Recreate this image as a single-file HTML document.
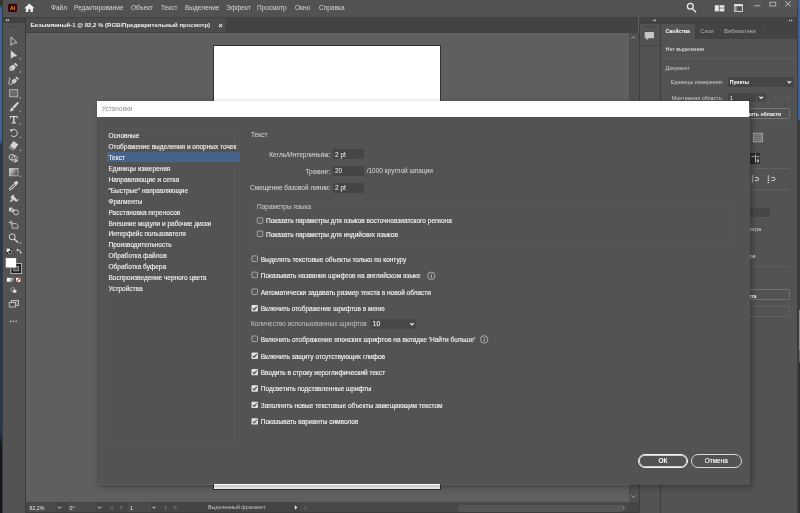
<!DOCTYPE html>
<html><head><meta charset="utf-8">
<style>
html,body{margin:0;padding:0;}
body{width:800px;height:513px;overflow:hidden;background:#5f5f5f;font-family:"Liberation Sans",sans-serif;font-size:6.5px;color:#e6e6e6;position:relative;}
div,span{position:absolute;box-sizing:border-box;white-space:nowrap;}
.t{line-height:10px;height:10px;}
/* app */
#menubar{left:0;top:0;width:800px;height:16.7px;background:#525252;}
#menubar .t{top:2.8px;font-size:6.5px;color:#d6d6d6;}
#leftedge{left:0;top:0;width:1.7px;height:513px;background:linear-gradient(#333 0,#333 5px,#41639a 8px,#41639a 140px,#283656 146px,#283656 430px,#15181f 445px,#15181f 100%);}
#leftedge2{left:1.7px;top:0px;width:1.7px;height:513px;background:#383838;}
#toolbar{left:3.4px;top:17px;width:22.2px;height:496px;background:#535353;border-right:1px solid #3c3c3c;}
#toolhead{left:3.4px;top:17px;width:22px;height:6px;background:#414141;}
#tabbar{left:25px;top:17px;width:613px;height:16px;background:#424242;}
#tab{left:26px;top:18px;width:200.3px;height:14px;background:#4c4c4c;}
#canvas{left:26px;top:33px;width:612px;height:469px;background:#5f5f5f;}
#artboard{left:213px;top:45px;width:228px;height:444.5px;background:#fff;border:0.7px solid #333;}
#vscroll{left:629px;top:33px;width:9.5px;height:469px;background:#505050;}
#statusbar{left:25px;top:502px;width:613.5px;height:11px;background:#444;}
#strip{left:638.5px;top:23.8px;width:22px;height:490px;background:#535353;border-left:1px solid #3d3d3d;border-right:1px solid #3d3d3d;}
#striphead{left:638.5px;top:17px;width:22px;height:6.8px;background:#434343;}
#panel{left:660.5px;top:17px;width:137px;height:496px;background:#535353;}
#panelhead{left:660.5px;top:17px;width:137px;height:7px;background:#434343;}
#paneltabs{left:660.5px;top:24px;width:137px;height:15px;background:#434343;}
#ptab1{left:660.5px;top:24.4px;width:34px;height:14.6px;background:#535353;}
/* dialog */
#dshadow{left:97px;top:101px;width:652.5px;height:383.5px;box-shadow:1.5px 2px 6px 0 rgba(0,0,0,.32);}
#dtitle{left:96.5px;top:100.8px;width:652.6px;height:16.5px;background:#fff;}
#dbody{left:97px;top:117.3px;width:652.5px;height:367.2px;background:#535353;}
.li{left:108.5px;font-size:6.5px;color:#f4f4f4;-webkit-text-stroke:0.12px #f4f4f4;}
.lab{color:#dcdcdc;}
.inp{background:#454545;height:9px;width:31px;left:332.5px;}
.cb{width:6.4px;height:6.4px;border:0.7px solid #b9b9b9;border-radius:0.6px;}
.cb.on{background:#e2e2e2;border-color:#e2e2e2}

.ct{color:#f6f6f6;margin-left:0.6px;-webkit-text-stroke:0.12px #f6f6f6;}
.btn{height:14px;border:1px solid #e8e8e8;border-radius:7px;text-align:center;line-height:12px;color:#fff;font-size:6.2px;}
</style></head><body><div id="root" style="left:0;top:0;width:800px;height:513px;overflow:hidden;will-change:transform;">
<div id="canvas"></div>
<div id="artboard"></div>
<div id="vscroll"></div>
<div id="tabbar"></div>
<div id="tab"></div>
<div class="t" style="left:30.5px;top:20px;font-weight:bold;color:#f0f0f0;font-size:6.0px">Безымянный-1 @ 82,2 % (RGB/Предварительный просмотр)</div>
<div class="t" style="left:218.4px;top:20.7px;color:#f4f4f4;font-size:7.2px;font-weight:bold">×</div>
<div id="statusbar"></div>

<div style="left:27.5px;top:503px;width:28px;height:9px;background:#4b4b4b;"><div class="t" style="left:2px;top:-0.5px;color:#e4e4e4;font-size:5.3px">82,2%</div></div>
<div style="left:67.5px;top:503px;width:28px;height:9px;background:#4b4b4b;"><div class="t" style="left:2px;top:-0.5px;color:#e4e4e4;font-size:5.3px">0°</div></div>
<div style="left:127.5px;top:503px;width:23px;height:9px;background:#4b4b4b;"><div class="t" style="left:2.5px;top:-0.5px;color:#e4e4e4;font-size:5.3px">1</div></div>
<div class="t" style="left:208px;top:502.3px;color:#c4c4c4;font-size:5.3px">Выделенный фрагмент</div>
<div style="left:300px;top:502px;width:329px;height:11px;background:#484848;"></div>
<div style="left:458px;top:504.5px;width:166px;height:7px;background:#565656;border-radius:3.5px;"></div>
<div style="left:629px;top:502px;width:9.5px;height:11px;background:#454545;"></div>
<div style="left:25px;top:512px;width:613px;height:1px;background:#3c3c3c;"></div>

<div id="menubar">
 <div class="t" style="left:51px">Файл</div>
 <div class="t" style="left:74px">Редактирование</div>
 <div class="t" style="left:131px">Объект</div>
 <div class="t" style="left:161px">Текст</div>
 <div class="t" style="left:185px">Выделение</div>
 <div class="t" style="left:226px">Эффект</div>
 <div class="t" style="left:257px">Просмотр</div>
 <div class="t" style="left:295px">Окно</div>
 <div class="t" style="left:319px">Справка</div>
</div>
<div id="toolbar"></div><div id="toolhead"></div>
<div id="leftedge"></div><div id="leftedge2"></div>
<div id="strip"></div><div id="striphead"></div>
<div id="panel"></div><div id="panelhead"></div><div id="paneltabs"></div><div id="ptab1"></div>


<div id="rightedge" style="left:797px;top:0;width:3px;height:513px;background:#3c3c3c;"></div>
<div style="left:798px;top:0;width:2px;height:120px;background:#3f6494;"></div>
<div style="left:798.5px;top:310px;width:1.5px;height:40px;background:#8c8c8c;"></div>
<div style="left:798.5px;top:350px;width:1.5px;height:12px;background:#4a6a96;"></div>
<div style="left:798.5px;top:362px;width:1.5px;height:151px;background:#2c2c2c;"></div>
<div class="t" style="left:665.5px;top:26.3px;font-weight:bold;color:#fff;font-size:5.15px">Свойства</div>
<div class="t" style="left:700.3px;top:26.3px;color:#b8b8b8;font-size:5.4px">Слои</div>
<div class="t" style="left:724.2px;top:26.3px;color:#b8b8b8;font-size:5.85px">Библиотеки</div>
<div style="left:763.5px;top:27px;width:0.8px;height:9px;background:#4c4c4c"></div>
<div class="t" style="left:665.5px;top:43.5px;color:#ededed;font-size:5.38px">Нет выделения</div>
<div style="left:661px;top:57.5px;width:136px;height:1px;background:#5d5d5d"></div>
<div class="t" style="left:665.5px;top:62.6px;color:#cdcdcd;font-size:5.45px">Документ</div>
<div class="t" style="left:670.7px;top:77px;color:#cdcdcd;font-size:5.36px">Единицы измерения:</div>
<div style="left:727.5px;top:77px;width:66.5px;height:10px;background:#454545;"><div class="t" style="left:2.2px;top:0;color:#fff;font-weight:bold;font-size:5.18px">Пункты</div></div>
<div class="t" style="left:671.8px;top:92.5px;color:#cdcdcd;font-size:5.39px">Монтажная область:</div>
<div style="left:727.5px;top:93px;width:28.5px;height:9px;background:#454545;"><div class="t" style="left:2.2px;top:-0.5px;color:#fff;font-size:5.4px">1</div></div>
<div style="left:757px;top:93px;width:8.5px;height:9px;background:#474747;"></div>
<div style="left:745px;top:107.6px;width:44.7px;height:11.2px;border:0.8px solid #767676;border-radius:1.5px;"></div>
<div class="t" style="left:730px;top:109px;color:#fff;font-weight:bold;font-size:5.15px;width:51.3px;text-align:right">Изменить области</div>
<div style="left:750px;top:152.7px;width:10.3px;height:11px;background:#2c2c2c;"></div>
<div style="left:750px;top:167.8px;width:40px;height:0.8px;background:#606060"></div>
<div style="left:750px;top:188.8px;width:40px;height:0.8px;background:#606060"></div>
<div style="left:745px;top:207.5px;width:25px;height:9.5px;background:#474747;"></div>
<div class="t" style="left:720px;top:224.3px;color:#d8d8d8;width:41px;text-align:right;font-size:5.4px">просмотра</div>
<div class="t" style="left:715px;top:250.5px;color:#d8d8d8;width:40.5px;text-align:right;font-size:5.4px">объектов</div>
<div style="left:750px;top:266px;width:40px;height:0.8px;background:#5e5e5e"></div>
<div style="left:700px;top:289px;width:89.5px;height:10.8px;border:0.8px solid #717171;border-radius:1.5px;"></div>
<div class="t" style="left:716px;top:290.6px;color:#fff;font-weight:bold;font-size:5.15px;width:40.3px;text-align:right">документа</div>
<div style="left:700px;top:306px;width:89.5px;height:10.8px;border:0.8px solid #626262;border-radius:1.5px;"></div>

<!--ICONS--><svg width="800" height="513" viewBox="0 0 800 513" style="position:absolute;left:0;top:0"><rect x="8" y="3.8" width="9" height="8.2" rx="1.4" fill="#3a0808"/>
<text x="12.5" y="10" font-size="5.2" font-weight="bold" fill="#ff9a2e" text-anchor="middle" font-family="Liberation Sans">Ai</text>
<path d="M29.4 3.6 L24.3 8.2 L25.9 8.2 L25.9 12 L28.3 12 L28.3 9.3 L30.5 9.3 L30.5 12 L32.9 12 L32.9 8.2 L34.5 8.2 Z" fill="#f0f0f0"/>
<rect x="40.5" y="3" width="0.6" height="10" fill="#555"/>
<circle cx="690.3" cy="6.3" r="2.9" fill="none" stroke="#f0f0f0" stroke-width="1.3"/>
<path d="M692.4 8.6 L695.6 11.8" stroke="#f0f0f0" stroke-width="1.3" stroke-linecap="round"/>
<rect x="703.3" y="4" width="0.6" height="8.5" fill="#606060"/>
<rect x="714.8" y="5.2" width="4" height="6.2" fill="#e6e6e6"/><rect x="719.6" y="5.2" width="4.8" height="2.5" fill="#e6e6e6"/><rect x="719.6" y="8.4" width="4.8" height="3" fill="#e6e6e6"/>
<rect x="734.4" y="4.6" width="8" height="6.8" fill="none" stroke="#e6e6e6" stroke-width="0.9"/><rect x="734.4" y="4.6" width="8" height="1.6" fill="#e6e6e6"/><rect x="734.4" y="6.2" width="2.3" height="5" fill="#9a9a9a"/>
<rect x="750.5" y="0" width="47" height="8.3" fill="#555555"/>
<rect x="765.3" y="0" width="0.7" height="8.3" fill="#484848"/><rect x="781.8" y="0" width="0.7" height="8.3" fill="#484848"/>
<rect x="754.5" y="5.3" width="5.8" height="0.9" fill="#bdbdbd"/>
<rect x="769.9" y="2.2" width="5.8" height="3.8" fill="none" stroke="#b8b8b8" stroke-width="0.9"/>
<path d="M785.3 1.3 L790.8 6.3 M790.8 1.3 L785.3 6.3" stroke="#c4c4c4" stroke-width="0.95"/>
<path d="M6 19 L7.6 20.3 L6 21.6 Z M7.8 19 L9.4 20.3 L7.8 21.6 Z" fill="#e0e0e0"/>
<path d="M8 26.9 H19.4" stroke="#444" stroke-width="1.2" stroke-dasharray="0.8 0.8"/>
<path d="M654.2 19.3 L652.8 20.4 L654.2 21.5 Z M656 19.3 L654.6 20.4 L656 21.5 Z" fill="#d8d8d8"/>
<path d="M789 19.4 L790.5 20.5 L789 21.6 Z M791.2 19.4 L792.7 20.5 L791.2 21.6 Z" fill="#e0e0e0"/>
<path d="M645.5 32 H653.2 Q654 32 654 32.8 V37.4 Q654 38.2 653.2 38.2 H648.6 L646.6 40.6 V38.2 H645.5 Q644.7 38.2 644.7 37.4 V32.8 Q644.7 32 645.5 32 Z" fill="#c6c6c6"/>
<rect x="639.5" y="45.2" width="20" height="0.9" fill="#424242"/><rect x="644.2" y="26.4" width="9.8" height="0.9" fill="#3e3e3e"/>
<path d="M631.3 38.6 L633.4 36.5 L635.5 38.6" fill="none" stroke="#bdbdbd" stroke-width="0.8"/>
<path d="M631.5 495.5 L633.6 497.6 L635.7 495.5" fill="none" stroke="#bdbdbd" stroke-width="0.8"/>
<path d="M11 36.9 L11 45.4 L13.3 43.4 L17 42.8 Z" fill="none" stroke="#d4d4d4" stroke-width="0.9" stroke-linejoin="round"/>
<path d="M10.8 50.3 L10.8 58.9 L13.3 56.8 L17.3 56.1 Z" fill="#d4d4d4"/>
<path d="M20.900000000000002 57.6 L20.900000000000002 59.2 L19.3 59.2 Z" fill="#c8c8c8"/>
<path d="M9 71 L10 66.6 L13.4 64.6 L15.8 67 L13.8 70.2 Z" fill="#d4d4d4"/><path d="M14 63.9 L15.3 62.8 L17.8 65.3 L16.6 66.5 Z" fill="#d4d4d4"/><path d="M9 71 L12 68" stroke="#535353" stroke-width="0.6"/>
<path d="M20.900000000000002 70.8 L20.900000000000002 72.39999999999999 L19.3 72.39999999999999 Z" fill="#c8c8c8"/>
<path d="M11.3 84 L12 80.2 L14.8 78.4 L16.9 80.5 L15.1 83.3 Z" fill="#d4d4d4"/><path d="M15.4 77.7 L16.6 76.6 L18.8 78.8 L17.7 80 Z" fill="#d4d4d4"/><path d="M11.3 84 L13.6 81.7" stroke="#535353" stroke-width="0.6"/>
<path d="M11.6 84.6 Q8.2 85 8.8 82.2 Q9.4 80.4 9.9 79.2 Q10.3 77.8 9 77.6" fill="none" stroke="#d4d4d4" stroke-width="0.9"/>
<rect x="9.7" y="89.7" width="8" height="7.1" fill="#6a6a6a" stroke="#bcbcbc" stroke-width="0.9"/>
<path d="M20.900000000000002 96.8 L20.900000000000002 98.39999999999999 L19.3 98.39999999999999 Z" fill="#c8c8c8"/>
<path d="M17.7 101.8 L18.9 103 L14.4 108.4 L12.6 106.7 Z" fill="#d4d4d4"/><path d="M12.2 107.2 L13.9 108.9 Q13.4 111.6 9.4 111.2 Q10.9 110.2 10.7 108.9 Q10.9 107.4 12.2 107.2 Z" fill="#d4d4d4"/>
<path d="M20.900000000000002 110 L20.900000000000002 111.6 L19.3 111.6 Z" fill="#c8c8c8"/>
<path d="M9.9 116 H17.7 V118.4 H17 L16.7 117.1 H14.5 V122.3 L15.9 122.6 V123.4 H11.7 V122.6 L13.1 122.3 V117.1 H10.9 L10.6 118.4 H9.9 Z" fill="#dcdcdc"/>
<path d="M20.900000000000002 123 L20.900000000000002 124.6 L19.3 124.6 Z" fill="#c8c8c8"/>
<path d="M11.2 135.6 A3.6 3.6 0 1 0 11.6 130.2" fill="none" stroke="#d4d4d4" stroke-width="1"/><path d="M9.6 129.4 L12.8 129.2 L11.4 132.2 Z" fill="#d4d4d4"/>
<path d="M20.900000000000002 136.2 L20.900000000000002 137.79999999999998 L19.3 137.79999999999998 Z" fill="#c8c8c8"/>
<path d="M13.6 141 L18.3 144.6 L14.6 149.4 L9.9 145.8 Z" fill="#d4d4d4"/><path d="M9.5 146.3 L14.1 149.9 L13.2 150.9 L8.7 147.4 Z" fill="#9a9a9a"/>
<path d="M20.900000000000002 149.3 L20.900000000000002 150.9 L19.3 150.9 Z" fill="#c8c8c8"/>
<circle cx="12" cy="157.2" r="2.9" fill="none" stroke="#d4d4d4" stroke-width="0.9"/><circle cx="14.6" cy="158.6" r="2.9" fill="none" stroke="#d4d4d4" stroke-width="0.9"/><path d="M14.6 157.4 L14.6 163.4 L16.3 162 L18.9 161.6 Z" fill="#d4d4d4" stroke="#535353" stroke-width="0.5"/>
<defs><linearGradient id="g1" x1="0" x2="1" y1="0" y2="0.6"><stop offset="0" stop-color="#e4e4e4"/><stop offset="1" stop-color="#4a4a4a"/></linearGradient></defs>
<rect x="9.5" y="168.4" width="8.5" height="7.4" fill="url(#g1)" stroke="#c4c4c4" stroke-width="0.8"/>
<path d="M20.900000000000002 175.2 L20.900000000000002 176.79999999999998 L19.3 176.79999999999998 Z" fill="#c8c8c8"/>
<path d="M9.5 189.9 L9.9 187.9 L14.2 183.6 L15.8 185.2 L11.5 189.5 Z" fill="#7a7a7a" stroke="#d4d4d4" stroke-width="1"/><path d="M13.6 182.8 L14.9 181.7 Q16.5 180.2 17.7 181.5 Q18.8 182.7 17.4 184.1 L16.3 185.5 Z" fill="#d4d4d4"/>
<path d="M9.2 201.6 Q11.2 200.8 11.8 198.6 L10.4 197.4 L12 195.6 Q13 194 14.4 195.2 L13.6 196.6 Q15.4 197 16 199 Q17.2 200.4 18.6 198.4 Q18.4 201.6 15.8 201.4 Q14.2 201 13.6 199.4 Q12.6 202.2 9.2 201.6 Z" fill="#d4d4d4"/>
<rect x="9" y="207.6" width="3.8" height="3.8" fill="#d4d4d4"/><rect x="11.4" y="209" width="3.6" height="3.6" fill="#bdbdbd" stroke="#535353" stroke-width="0.4"/><circle cx="16" cy="212.4" r="2.5" fill="#535353" stroke="#d4d4d4" stroke-width="0.9"/>
<path d="M8.6 222.4 H13 M10.8 220.2 V224.6" stroke="#d4d4d4" stroke-width="0.8"/><path d="M12.2 223.6 H16.2 L18 225.4 V228.2 H12.2 Z" fill="none" stroke="#d4d4d4" stroke-width="0.8"/>
<circle cx="12.2" cy="236.8" r="3" fill="none" stroke="#d4d4d4" stroke-width="1"/><path d="M14.5 239.2 L17.8 242.3" stroke="#d4d4d4" stroke-width="1.3" stroke-linecap="round"/>
<path d="M20.900000000000002 241.8 L20.900000000000002 243.4 L19.3 243.4 Z" fill="#c8c8c8"/>
<circle cx="9" cy="251" r="3.2" fill="#333"/><rect x="6.6" y="248.6" width="3.4" height="3.4" fill="#fff"/><rect x="8.4" y="250.6" width="3" height="3" fill="#222" stroke="#ddd" stroke-width="0.5"/>
<path d="M17.4 250 Q20.8 249.6 20.8 252.6" fill="none" stroke="#d4d4d4" stroke-width="0.9"/><path d="M16.2 250 L18 248.6 L18 251.4 Z" fill="#d4d4d4"/><path d="M20.8 254 L19.4 252.2 L22.2 252.2 Z" fill="#d4d4d4"/>
<rect x="11" y="263.6" width="10.6" height="10" fill="#1c1c1c" stroke="#cfcfcf" stroke-width="0.8"/><rect x="13.8" y="266.3" width="5" height="4.6" fill="#535353" stroke="#cfcfcf" stroke-width="0.6"/>
<rect x="5.8" y="258" width="10.3" height="9.6" fill="#fff" stroke="#888" stroke-width="0.3"/>
<rect x="6.8" y="277.8" width="3.8" height="4" fill="#f4f4f4"/><rect x="10.9" y="277.8" width="3.5" height="4" fill="url(#g1)"/><rect x="16" y="277.8" width="4.4" height="4" fill="#fff"/><path d="M16.2 281.6 L20.2 278" stroke="#e02020" stroke-width="1.1"/>
<circle cx="12.8" cy="289.4" r="1.9" fill="none" stroke="#bdbdbd" stroke-width="0.7"/><rect x="13" y="289.8" width="3.4" height="3" fill="#d8d8d8"/>
<rect x="11.4" y="300.4" width="7.2" height="5" fill="#6a6a6a" stroke="#d4d4d4" stroke-width="0.8"/><rect x="9.2" y="302.4" width="6.2" height="4.6" fill="#535353" stroke="#d4d4d4" stroke-width="0.8"/>
<circle cx="10.6" cy="321.2" r="0.8" fill="#d8d8d8"/><circle cx="13.4" cy="321.2" r="0.8" fill="#d8d8d8"/><circle cx="16.2" cy="321.2" r="0.8" fill="#d8d8d8"/>
<path d="M787.5 81.1 L789.3 82.9 L791.0999999999999 81.1" fill="none" stroke="#f0f0f0" stroke-width="1.15"/>
<path d="M759.4000000000001 96.6 L761.2 98.4 L763.0 96.6" fill="none" stroke="#f0f0f0" stroke-width="1.15"/>
<path d="M776.6 95.8 L775 97.5 L776.6 99.2" fill="none" stroke="#707070" stroke-width="0.8"/><path d="M786.2 95.8 L787.8 97.5 L786.2 99.2" fill="none" stroke="#707070" stroke-width="0.8"/>
<rect x="753.6" y="133.2" width="9" height="8.6" fill="#646464" stroke="#c4c4c4" stroke-width="0.7"/><path d="M755.8 133.2 V141.8 M758.1 133.2 V141.8 M760.4 133.2 V141.8 M753.6 135.4 H762.6 M753.6 137.5 H762.6 M753.6 139.6 H762.6" stroke="#8e8e8e" stroke-width="0.55"/>
<rect x="760" y="126.8" width="30" height="0.7" fill="#5b5b5b"/>
<path d="M755.6 154.5 V162.5" stroke="#e8e8e8" stroke-width="0.8"/><path d="M751.2 156.6 H754.6 M756.6 156.6 H759.4" stroke="#e8e8e8" stroke-width="0.7"/><path d="M758.6 158.6 L757 160.8 H759 L757.6 163" fill="none" stroke="#fff" stroke-width="0.7"/>
<path d="M752.6 175.4 V183" stroke="#cfcfcf" stroke-width="1.6" stroke-dasharray="0.6 0.5"/><path d="M755 177.4 H757 Q758.6 177.4 758.6 179 Q758.6 180.6 757 180.6 H755" fill="none" stroke="#e0e0e0" stroke-width="0.9"/>
<path d="M768.4 175.4 V183" stroke="#e8e8e8" stroke-width="1.5" stroke-dasharray="1.2 1"/><path d="M771.4 177.4 H773.4 Q775 177.4 775 179 Q775 180.6 773.4 180.6 H771.4" fill="none" stroke="#e0e0e0" stroke-width="0.9"/>
<path d="M57.9 506.7 L59.5 508.3 L61.1 506.7" fill="none" stroke="#e0e0e0" stroke-width="1.0"/>
<path d="M97.9 506.7 L99.5 508.3 L101.1 506.7" fill="none" stroke="#e0e0e0" stroke-width="1.0"/>
<path d="M152.4 506.7 L154 508.3 L155.6 506.7" fill="none" stroke="#e0e0e0" stroke-width="1.0"/>
<path d="M110 505.6 V509.4 M112.8 505.6 L110.8 507.5 L112.8 509.4 Z M122 505.6 L120 507.5 L122 509.4 Z" fill="#686868" stroke="#686868" stroke-width="0.6"/>
<path d="M165 505.6 L167 507.5 L165 509.4 Z M174 505.6 L176 507.5 L174 509.4 Z M177 505.6 V509.4" fill="#686868" stroke="#686868" stroke-width="0.6"/>
<path d="M294.8 505.2 L297.4 507.5 L294.8 509.8 Z" fill="#e6e6e6"/>
<path d="M306.4 505.8 L305 507.5 L306.4 509.2" fill="none" stroke="#9a9a9a" stroke-width="0.7"/>
<path d="M623 505.8 L624.4 507.5 L623 509.2" fill="none" stroke="#b0b0b0" stroke-width="0.7"/></svg><!--/ICONS-->
<!-- dialog -->
<div id="dshadow"></div>
<div id="dtitle"><div class="t" style="left:5.2px;top:3.6px;color:#909090;font-size:6.55px">Установки</div></div>
<div id="dbody"></div>
<div id="dcontent" style="left:0;top:0;width:800px;height:513px;">
<div id="listbox" style="left:106px;top:128px;width:134px;height:314px;border:1px solid #565656;"></div>
<div id="sel" style="left:106.5px;top:152px;width:133px;height:10px;background:#47638b;"></div>
<div class="t li" style="top:131.3px">Основные</div>
<div class="t li" style="top:142.2px">Отображение выделения и опорных точек</div>
<div class="t li" style="top:153.1px">Текст</div>
<div class="t li" style="top:164.0px">Единицы измерения</div>
<div class="t li" style="top:174.9px">Направляющие и сетка</div>
<div class="t li" style="top:185.8px">"Быстрые" направляющие</div>
<div class="t li" style="top:196.7px">Фрагменты</div>
<div class="t li" style="top:207.6px">Расстановка переносов</div>
<div class="t li" style="top:218.5px">Внешние модули и рабочие диски</div>
<div class="t li" style="top:229.4px">Интерфейс пользователя</div>
<div class="t li" style="top:240.3px">Производительность</div>
<div class="t li" style="top:251.2px">Обработка файлов</div>
<div class="t li" style="top:262.1px">Обработка буфера</div>
<div class="t li" style="top:273.0px">Воспроизведение черного цвета</div>
<div class="t li" style="top:283.9px">Устройства</div>
<div class="t lab" style="left:251px;top:129.6px">Текст</div>
<div class="t lab" style="right:469.5px;top:149.6px;letter-spacing:0.02px">Кегль/Интерлиньяж:</div>
<div class="t lab" style="right:469.5px;top:166.5px">Трекинг:</div>
<div class="t lab" style="right:469.5px;top:183.2px">Смещение базовой линии:</div>
<div class="inp" style="top:149.3px;height:9.5px"><div class="t" style="left:2.5px;top:0.3px;color:#f4f4f4">2 pt</div></div>
<div class="inp" style="top:166.4px;height:9.2px"><div class="t" style="left:2.5px;top:0px;color:#f4f4f4">20</div></div>
<div class="inp" style="top:183.2px;height:9.4px"><div class="t" style="left:2.5px;top:0px;color:#f4f4f4">2 pt</div></div>
<div class="t lab" style="left:366.7px;top:166.2px">/1000 круглой шпации</div>
<div id="grp" style="left:251px;top:201px;width:483px;height:40px;border:1px solid #565656;"></div>
<div class="t" style="left:257px;top:201.8px;color:#cfcfcf">Параметры языка</div>
<div class="t ct" style="left:265.4px;top:216px">Показать параметры для языков восточноазиатского региона</div>
<div class="t ct" style="left:265.4px;top:230px">Показать параметры для индийских языков</div>
<div class="t ct" style="left:260.2px;top:255px">Выделять текстовые объекты только по контуру</div>
<div class="t ct" style="left:260.2px;top:271px">Показывать названия шрифтов на английском языке</div>
<div class="t ct" style="left:260.2px;top:288px">Автоматически задавать размер текста в новой области</div>
<div class="t ct" style="left:260.2px;top:304px">Включить отображение шрифтов в меню</div>
<div class="t" style="left:251px;top:319px;color:#c2c2c2">Количество использованных шрифтов</div>
<div style="left:370.4px;top:319px;width:45.6px;height:9.6px;background:#484848;border-radius:1px"><div class="t" style="left:2.4px;top:0;color:#f6f6f6;-webkit-text-stroke:0.12px #f6f6f6">10</div></div>
<div class="t ct" style="left:260.2px;top:335px;letter-spacing:0.04px">Включить отображение японских шрифтов на вкладке 'Найти больше'</div>
<div class="t ct" style="left:260.2px;top:352px">Включить защиту отсутствующих глифов</div>
<div class="t ct" style="left:260.2px;top:368px">Вводить в строку иероглифический текст</div>
<div class="t ct" style="left:260.2px;top:384px">Подсветить подставленные шрифты</div>
<div class="t ct" style="left:260.2px;top:401px">Заполнять новые текстовые объекты замещающим текстом</div>
<div class="t ct" style="left:260.2px;top:417px">Показывать варианты символов</div>
<div class="btn" style="left:637.8px;top:454px;width:50.4px;height:14.3px;border-width:1px;border-color:#f4f4f4;box-shadow:inset 0 0 0 0.75px #f4f4f4;line-height:12.6px;font-weight:bold;font-size:6.6px">ОК</div>
<div class="btn" style="left:690.8px;top:454px;width:51px;height:14.3px;border-width:1.1px;border-color:#d8d8d8;line-height:12.1px;font-size:6.45px;-webkit-text-stroke:0.12px #fff">Отмена</div>
</div>
<!--DICONS--><svg width="800" height="513" viewBox="0 0 800 513" style="position:absolute;left:0;top:0"><rect x="257.25" y="217.70" width="5.6" height="5.6" rx="0.8" fill="#595959" stroke="#b6b6b6" stroke-width="0.8"/>
<rect x="257.25" y="231.00" width="5.6" height="5.6" rx="0.8" fill="#595959" stroke="#b6b6b6" stroke-width="0.8"/>
<rect x="251.90" y="255.90" width="5.6" height="5.6" rx="0.8" fill="#595959" stroke="#b6b6b6" stroke-width="0.8"/>
<rect x="251.90" y="272.10" width="5.6" height="5.6" rx="0.8" fill="#595959" stroke="#b6b6b6" stroke-width="0.8"/>
<rect x="251.90" y="288.90" width="5.6" height="5.6" rx="0.8" fill="#595959" stroke="#b6b6b6" stroke-width="0.8"/>
<rect x="251.50" y="305.10" width="6.4" height="6.4" rx="0.9" fill="#e2e2e2"/>
<path d="M252.85 308.40 L254.25 309.85 L256.65 306.70" fill="none" stroke="#3c3c3c" stroke-width="1.05"/>
<rect x="251.90" y="336.00" width="5.6" height="5.6" rx="0.8" fill="#595959" stroke="#b6b6b6" stroke-width="0.8"/>
<rect x="251.50" y="352.50" width="6.4" height="6.4" rx="0.9" fill="#e2e2e2"/>
<path d="M252.85 355.80 L254.25 357.25 L256.65 354.10" fill="none" stroke="#3c3c3c" stroke-width="1.05"/>
<rect x="251.50" y="368.90" width="6.4" height="6.4" rx="0.9" fill="#e2e2e2"/>
<path d="M252.85 372.20 L254.25 373.65 L256.65 370.50" fill="none" stroke="#3c3c3c" stroke-width="1.05"/>
<rect x="251.50" y="385.30" width="6.4" height="6.4" rx="0.9" fill="#e2e2e2"/>
<path d="M252.85 388.60 L254.25 390.05 L256.65 386.90" fill="none" stroke="#3c3c3c" stroke-width="1.05"/>
<rect x="251.50" y="401.70" width="6.4" height="6.4" rx="0.9" fill="#e2e2e2"/>
<path d="M252.85 405.00 L254.25 406.45 L256.65 403.30" fill="none" stroke="#3c3c3c" stroke-width="1.05"/>
<rect x="251.50" y="418.20" width="6.4" height="6.4" rx="0.9" fill="#e2e2e2"/>
<path d="M252.85 421.50 L254.25 422.95 L256.65 419.80" fill="none" stroke="#3c3c3c" stroke-width="1.05"/>
<path d="M410.2 323.2 L412 325 L413.8 323.2" fill="none" stroke="#f0f0f0" stroke-width="1.15"/><circle cx="431.3" cy="275.8" r="3.7" fill="none" stroke="#d0d0d0" stroke-width="0.7"/><rect x="430.90000000000003" y="274.90000000000003" width="0.8" height="2.8" fill="#d8d8d8"/><rect x="430.90000000000003" y="273.6" width="0.8" height="0.8" fill="#d8d8d8"/>
<circle cx="484.2" cy="339.4" r="3.7" fill="none" stroke="#d0d0d0" stroke-width="0.7"/><rect x="483.8" y="338.5" width="0.8" height="2.8" fill="#d8d8d8"/><rect x="483.8" y="337.2" width="0.8" height="0.8" fill="#d8d8d8"/></svg><!--/DICONS-->
</div></body></html>
